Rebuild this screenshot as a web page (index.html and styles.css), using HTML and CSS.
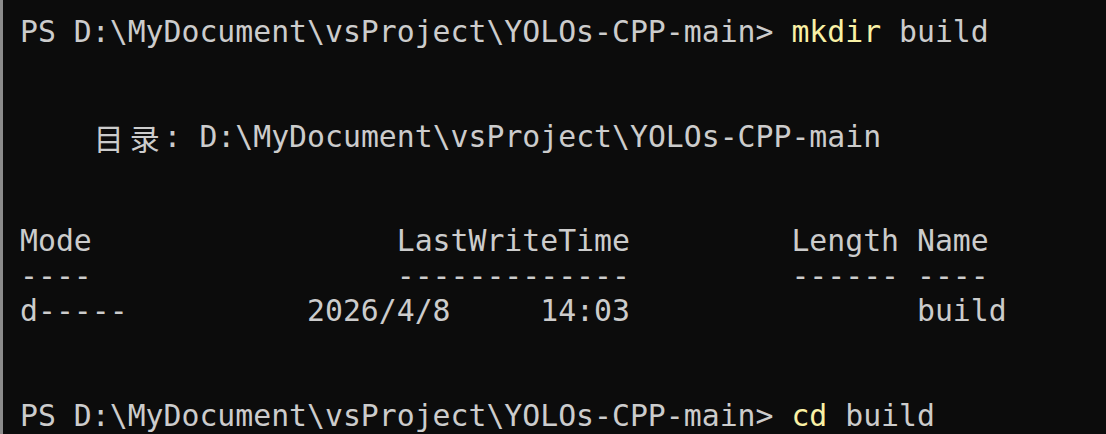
FILE: index.html
```html
<!DOCTYPE html>
<html lang="zh-CN">
<head>
<meta charset="utf-8">
<link rel="stylesheet" href="styles.css">
</head>
<body>
<div class="term">
<div class="line">PS D:\MyDocument\vsProject\YOLOs-CPP-main&gt; <span class="cmd">mkdir</span> build</div>
<div class="line"> </div>
<div class="line"> </div>
<div class="line">    <span class="wide">目</span><span class="wide">录</span>: D:\MyDocument\vsProject\YOLOs-CPP-main</div>
<div class="line"> </div>
<div class="line"> </div>
<div class="line">Mode                 LastWriteTime         Length Name</div>
<div class="line">----                 -------------         ------ ----</div>
<div class="line">d-----          2026/4/8     14:03                build</div>
<div class="line"> </div>
<div class="line"> </div>
<div class="line">PS D:\MyDocument\vsProject\YOLOs-CPP-main&gt; <span class="cmd">cd</span> build</div>
</div>
</body>
</html>
```

FILE: styles.css
```css
html, body {
  margin: 0;
  padding: 0;
  background: #0c0c0c;
  height: 100%;
  overflow: hidden;
}
.term {
  box-sizing: border-box;
  height: 434px;
  border-left: 3px solid #8c8c8c;
  padding: 15px 0 0 17px;
  font-family: "DejaVu Sans Mono", "Noto Sans CJK SC", monospace;
  font-size: 29.8px;
  line-height: 34.9px;
  color: #cccccc;
}
.line {
  white-space: pre;
  height: 34.9px;
}
.cmd {
  color: #f9f1a5;
}
.wide {
  display: inline-block;
  width: 35.9px;
  font-family: "Noto Sans CJK SC", sans-serif;
  font-size: 30px;
  padding-left: 2px;
  box-sizing: border-box;
  vertical-align: top;
}
```
